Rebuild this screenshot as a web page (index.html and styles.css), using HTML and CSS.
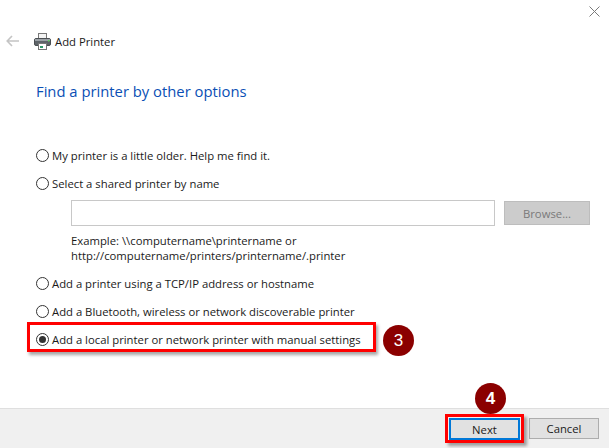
FILE: index.html
```html
<!DOCTYPE html>
<html lang="en">
<head>
<meta charset="utf-8">
<title>Add Printer</title>
<link rel="stylesheet" href="styles.css">
</head>
<body>
<div class="window">
  <div class="titlebar">
    <svg class="close" width="11" height="11" viewBox="0 0 11 11"><path d="M.5.5l10 10M10.5.5l-10 10" stroke="#7a7a7a" fill="none"/></svg>
  </div>
  <div class="nav">
    <svg class="back" width="13" height="12" viewBox="0 0 13 12"><path d="M6 1L1.2 6 6 11M1.2 6H13" stroke="#c4c4c4" stroke-width="1.6" fill="none"/></svg>
    <svg class="printer" width="17" height="17" viewBox="0 0 17 17">
      <rect x="4.5" y="0.5" width="8" height="5" fill="#f4f4f4" stroke="#777"/>
      <rect x="0.5" y="5.5" width="16" height="7" rx="1.5" fill="#5d6368" stroke="#4a4e52"/>
      <rect x="1" y="6" width="15" height="2" fill="#9aa0a5"/>
      <rect x="4.5" y="10.5" width="8" height="6" fill="#fff" stroke="#777"/>
      <rect x="6" y="13" width="3" height="2" fill="#2f9a6b"/>
      <rect x="14" y="7" width="1.5" height="1.5" fill="#5fd35f"/>
    </svg>
    <span class="nav-title">Add Printer</span>
  </div>
  <h1 class="heading">Find a printer by other options</h1>
  <div class="options">
    <div class="option first"><span class="radio"></span><span>My printer is a little older. Help me find it.</span></div>
    <div class="option second"><span class="radio"></span><span>Select a shared printer by name</span></div>
    <div class="share">
      <div class="share-row">
        <div class="textbox"></div>
        <div class="browse">Browse...</div>
      </div>
      <p class="example">Example: \\computername\printername or<br>http://computername/printers/printername/.printer</p>
    </div>
    <div class="option third"><span class="radio"></span><span>Add a printer using a TCP/IP address or hostname</span></div>
    <div class="option fourth"><span class="radio"></span><span>Add a Bluetooth, wireless or network discoverable printer</span></div>
    <div class="option fifth"><span class="radio checked"></span><span>Add a local printer or network printer with manual settings</span></div>
  </div>
  <div class="footer">
    <div class="btn btn-next">Next</div>
    <div class="btn">Cancel</div>
  </div>
  <div class="badge badge-3">3</div>
  <div class="badge badge-4">4</div>
</div>
</body>
</html>
```
FILE: styles.css
```css
*, *::before, *::after { box-sizing: border-box; }
html, body { margin: 0; padding: 0; }
body {
  width: 609px;
  height: 448px;
  overflow: hidden;
  background: #fff;
  font-family: "Open Sans", "Noto Sans", sans-serif;
  font-size: 11.3px;
  color: #1a1a1a;
}
.window { position: relative; width: 609px; height: 448px; display: flex; flex-direction: column; }
.titlebar { height: 32px; display: flex; justify-content: flex-end; padding: 6px 9px 0 0; }
.close { display: block; }
.nav { height: 18px; display: flex; align-items: center; padding-left: 6px; }
.back { margin-right: 15px; }
.printer { margin-right: 4px; }
.nav-title { font-size: 11.3px; }
.heading {
  margin: 21px 0 0 36px;
  font-size: 14.8px;
  line-height: 40px;
  height: 40px;
  font-weight: 400;
  color: #0a4fb5;
}
.options { padding-left: 36px; display: flex; flex-direction: column; }
.option { display: flex; align-items: center; gap: 3px; height: 16px; white-space: nowrap; }
.first { margin-top: 36px; }
.second { margin-top: 12px; }
.third { margin-top: 12px; }
.fourth { margin-top: 12px; }
.fifth { margin-top: 12px; position: relative; }
.fifth::before {
  content: "";
  position: absolute;
  left: -9px;
  top: -9px;
  width: 349px;
  height: 30px;
  border: 3px solid #f00;
  box-shadow: 2px 3px 3px rgba(0,0,0,.35);
}
.radio { width: 13px; height: 13px; border: 1px solid #333; border-radius: 50%; background: #fff; flex: none; position: relative; }
.radio.checked::after { content: ""; position: absolute; left: 2px; top: 2px; width: 7px; height: 7px; border-radius: 50%; background: #333; }
.share { padding-left: 35px; margin-top: 9px; }
.share-row { display: flex; gap: 9px; }
.textbox { width: 424px; height: 26px; border: 1px solid #c8c8c8; background: #fff; }
.browse {
  width: 86px; height: 24px; margin-top: 1px;
  background: #cccccc; border: 1px solid #bdbdbd; color: #7a7a7a;
  display: flex; align-items: center; justify-content: center;
}
.example { margin: 7px 0 0; line-height: 15px; }
.footer {
  margin-top: auto;
  height: 40px;
  background: #f0f0f0;
  border-top: 1px solid #dfdfdf;
  display: flex;
  justify-content: flex-end;
  align-items: flex-start;
  gap: 9px;
  padding: 9px 10px 0 0;
}
.btn {
  width: 70px; height: 21px;
  background: #e1e1e1; border: 1px solid #adadad;
  display: flex; align-items: center; justify-content: center;
}
.btn-next {
  border: 2px solid #0078d7;
  width: 71px;
  height: 22px;
  position: relative;
}
.btn-next::before {
  content: "";
  position: absolute;
  left: -6px;
  top: -6px;
  width: 79px;
  height: 29px;
  border: 3px solid #f00;
  box-shadow: 3px 3px 3px rgba(0,0,0,.35);
}
.badge {
  position: absolute;
  width: 31px; height: 31px;
  border-radius: 50%;
  background: #8b0000;
  color: #fff;
  font-family: "Liberation Sans", sans-serif;
  font-size: 17px;
  display: flex; align-items: center; justify-content: center;
}
.badge-3 { left: 383px; top: 325px; }
.badge-4 { left: 475px; top: 383px; font-weight: 700; }
```
